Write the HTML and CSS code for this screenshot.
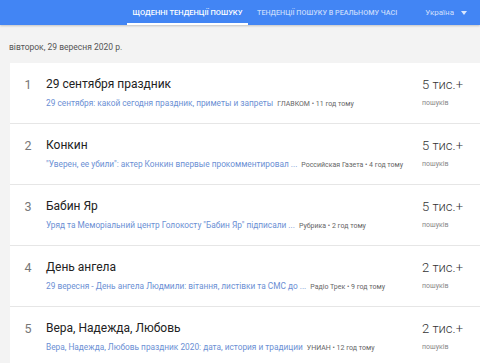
FILE: index.html
```html
<!DOCTYPE html>
<html lang="uk">
<head>
<meta charset="utf-8">
<link rel="stylesheet" href="styles.css">
</head>
<body>
<header class="topbar">
  <nav class="tabs">
    <a class="tab active">ЩОДЕННІ ТЕНДЕНЦІЇ ПОШУКУ</a>
    <a class="tab">ТЕНДЕНЦІЇ ПОШУКУ В РЕАЛЬНОМУ ЧАСІ</a>
  </nav>
  <div class="country">Україна <span class="caret"></span></div>
</header>
<main class="content">
  <div class="date">вівторок, 29 вересня 2020 р.</div>
  <div class="list">
    <div class="row">
      <div class="idx">1</div>
      <div class="details">
        <div class="title">29 сентября праздник</div>
        <div class="sub"><span class="link">29 сентября: какой сегодня праздник, приметы и запреты</span><span class="src">ГЛАВКОМ • 11 год тому</span></div>
      </div>
      <div class="count"><div class="num">5 тис.+</div><div class="lbl">пошуків</div></div>
    </div>
    <div class="row">
      <div class="idx">2</div>
      <div class="details">
        <div class="title">Конкин</div>
        <div class="sub"><span class="link">"Уверен, ее убили": актер Конкин впервые прокомментировал ...</span><span class="src">Российская Газета • 4 год тому</span></div>
      </div>
      <div class="count"><div class="num">5 тис.+</div><div class="lbl">пошуків</div></div>
    </div>
    <div class="row">
      <div class="idx">3</div>
      <div class="details">
        <div class="title">Бабин Яр</div>
        <div class="sub"><span class="link">Уряд та Меморіальний центр Голокосту "Бабин Яр" підписали ...</span><span class="src">Рубрика • 2 год тому</span></div>
      </div>
      <div class="count"><div class="num">5 тис.+</div><div class="lbl">пошуків</div></div>
    </div>
    <div class="row">
      <div class="idx">4</div>
      <div class="details">
        <div class="title">День ангела</div>
        <div class="sub"><span class="link">29 вересня - День ангела Людмили: вітання, листівки та СМС до ...</span><span class="src">Радіо Трек • 9 год тому</span></div>
      </div>
      <div class="count"><div class="num">2 тис.+</div><div class="lbl">пошуків</div></div>
    </div>
    <div class="row">
      <div class="idx">5</div>
      <div class="details">
        <div class="title">Вера, Надежда, Любовь</div>
        <div class="sub"><span class="link">Вера, Надежда, Любовь праздник 2020: дата, история и традиции</span><span class="src">УНИАН • 12 год тому</span></div>
      </div>
      <div class="count"><div class="num">2 тис.+</div><div class="lbl">пошуків</div></div>
    </div>
  </div>
</main>
</body>
</html>
```
FILE: styles.css
```css
* { box-sizing: border-box; }
html, body { margin: 0; padding: 0; }
body {
  font-family: Roboto, "Noto Sans", sans-serif;
  background: #f3f3f3;
  width: 480px;
  height: 363px;
  overflow: hidden;
}
.topbar {
  height: 25px;
  background: #4285f4;
  display: flex;
  align-items: stretch;
  box-shadow: 0 1px 2px rgba(0,0,0,0.2);
}
.tabs {
  display: flex;
  margin-left: 127px;
}
.tab {
  display: flex;
  align-items: center;
  padding: 0 8px;
  font-size: 7.2px;
  font-weight: 500;
  color: rgba(255,255,255,0.7);
  border-bottom: 2px solid transparent;
  padding-top: 2px;
  white-space: nowrap;
}
.tab.active {
  color: #fff;
  border-bottom-color: #fff;
  width: 121px;
  justify-content: center;
  font-size: 7.5px;
}
.tab + .tab { margin-left: 1px; }
.country {
  margin-left: auto;
  margin-right: 13px;
  display: flex;
  align-items: center;
  font-size: 8px;
  color: rgba(255,255,255,0.75);
  gap: 7px;
}
.caret {
  width: 0; height: 0;
  border-left: 3px solid transparent;
  border-right: 3px solid transparent;
  border-top: 4px solid rgba(255,255,255,0.8);
}
.content { padding: 17px 0 0 10px; }
.date {
  font-size: 8.5px;
  color: #555;
  margin-left: -1px;
  height: 13px;
}
.list {
  margin-top: 8px;
  display: flex;
  flex-direction: column;
  gap: 1px;
  background: #e6e6e6;
}
.row {
  background: #fff;
  height: 60px;
  display: flex;
  align-items: flex-start;
  padding-top: 13px;
}
.idx {
  width: 36px;
  text-align: center;
  font-size: 12.5px;
  color: #777;
  line-height: 17px;
}
.details { flex: 1; min-width: 0; }
.title {
  font-size: 12px;
  color: #222;
  line-height: 17px;
}
.sub {
  margin-top: 5px;
  font-size: 8.3px;
  line-height: 11px;
  white-space: nowrap;
}
.link { color: #6b8fd4; margin-right: 4px; }
.src { color: #666; font-size: 7px; }
.count { width: 58px; }
.num { font-size: 13px; font-weight: 300; color: #333; line-height: 17px; }
.lbl { margin-top: 5px; font-size: 7px; color: #888; line-height: 11px; }
```
